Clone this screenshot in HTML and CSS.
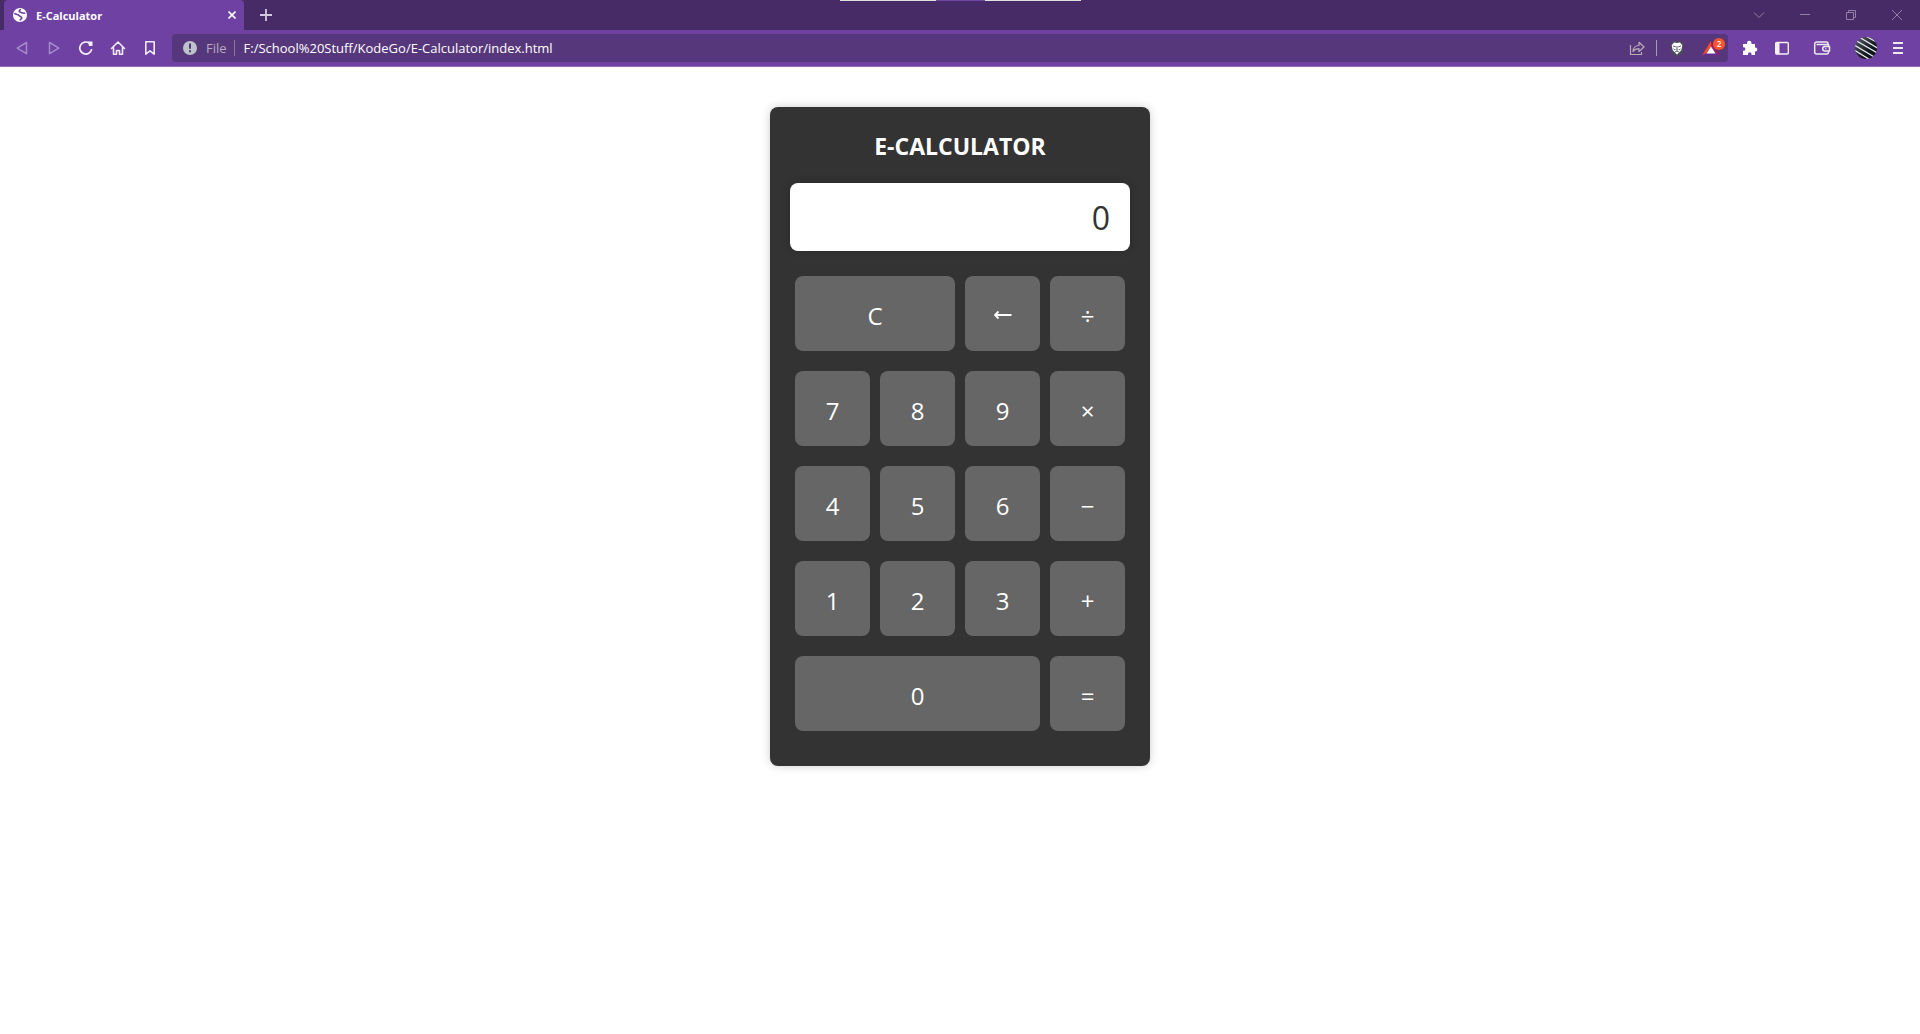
FILE: index.html
```html
<!DOCTYPE html>
<html lang="en">
<head>
<meta charset="utf-8">
<title>E-Calculator</title>
<link rel="stylesheet" href="styles.css">
</head>
<body>
<header class="browser">
  <div class="tab-strip">
    <div class="tab">
      <svg class="icon" width="16" height="16" viewBox="0 0 16 16"><circle cx="8" cy="8" r="7" fill="#fff"/><path d="M2.500 6.200C4 8 6 7 7 8.500s2.500 1 2.800 2.200-1.300 1-1.800 2.800M9 2.500C7 3 6.500 4.800 8.500 5.300s2 1.500 4.700.7" fill="none" stroke="#6e41a3" stroke-width="1.700"/></svg>
      <span class="tab-title">E-Calculator</span>
      <button class="tab-close" aria-label="Close tab"><svg width="8" height="8" viewBox="0 0 8 8"><path d="M.5.5l7 7M7.500.5l-7 7" stroke="#fff" stroke-width="1.600"/></svg></button>
    </div>
    <button class="new-tab" aria-label="New tab"><svg width="12" height="12" viewBox="0 0 12 12"><path d="M6 0v12M0 6h12" stroke="#d3c9de" stroke-width="1.800"/></svg></button>
    <div class="window-controls">
      <button class="window-button" aria-label="Search tabs"><svg width="12" height="12" viewBox="0 0 12 12"><path d="M1 3.500l5 5 5-5" class="thin"/></svg></button>
      <button class="window-button" aria-label="Minimize"><svg width="12" height="12" viewBox="0 0 12 12"><path d="M1 5.500h10" class="thin"/></svg></button>
      <button class="window-button" aria-label="Restore"><svg width="12" height="12" viewBox="0 0 12 12"><path d="M1.500 3.500h7v7h-7zM3.500 3.500v-2h7v7h-2" class="thin"/></svg></button>
      <button class="window-button" aria-label="Close"><svg width="12" height="12" viewBox="0 0 12 12"><path d="M1 1l10 10M11 1L1 11" class="thin"/></svg></button>
    </div>
    <div class="edge-marks"><i></i><i></i><i></i></div>
  </div>
  <div class="toolbar">
    <nav class="tools">
      <button class="tool" aria-label="Back"><svg width="16" height="16" viewBox="0 0 16 16"><path d="M12.500 2.500v11.200L3.200 8.100z" fill="none" stroke="#a78bc8" stroke-width="1.500" stroke-linejoin="round"/></svg></button>
      <button class="tool" aria-label="Forward"><svg width="16" height="16" viewBox="0 0 16 16"><path d="M3.500 2.500v11.200l9.300-5.600z" fill="none" stroke="#a78bc8" stroke-width="1.500" stroke-linejoin="round"/></svg></button>
      <button class="tool" aria-label="Reload"><svg width="16" height="16" viewBox="0 0 16 16"><path d="M13.700 9.200A6 6 0 1 1 11.500 3.300" fill="none" stroke="#f4effa" stroke-width="1.700"/><path d="M10 1.500h4.500V6H11z" fill="#f4effa"/></svg></button>
      <button class="tool" aria-label="Home"><svg width="16" height="16" viewBox="0 0 16 16"><path d="M1.500 8.500L8 2l6.500 6.500M3.500 7.500v6.700h3v-3.700h3v3.700h3V7.500" fill="none" stroke="#f0eaf7" stroke-width="1.600" stroke-linejoin="round" stroke-linecap="round"/></svg></button>
      <button class="tool" aria-label="Bookmark"><svg width="16" height="16" viewBox="0 0 16 16"><path d="M3.800 1.800h8.400v12.400L8 10.800l-4.200 3.400z" fill="none" stroke="#f0eaf7" stroke-width="1.600" stroke-linejoin="round"/></svg></button>
    </nav>
    <div class="omnibox">
      <svg class="icon" width="16" height="16" viewBox="0 0 16 16"><circle cx="8" cy="8" r="7" fill="#bec2ca"/><path d="M8 3.500v5.200M8 10.300v2" stroke="#57377b" stroke-width="2"/></svg>
      <span class="scheme">File</span>
      <input class="url" type="text" aria-label="Address" value="F:/School%20Stuff/KodeGo/E-Calculator/index.html">
      <button class="omni-button share" aria-label="Share"><svg width="16" height="16" viewBox="0 0 16 16"><path d="M1.500 5v9.500h11V12" fill="none" stroke="#b9aabb" stroke-width="1.200"/><path d="M4 11.500c.3-4 2.500-6 6-6V2.300L15 7l-5 4.500V8.700c-3 0-4.500.8-6 2.800z" fill="none" stroke="#b9aabb" stroke-width="1.200" stroke-linejoin="round"/></svg></button>
      <button class="omni-button" aria-label="Shields"><svg width="16" height="18" viewBox="0 0 16 18"><path d="M4.500 1h7l3 3-.7 8L8 17l-5.800-5-.7-8z" fill="#4a4d58"/><path d="M5 2.500l3 .6 3-.6 2.300 2.700-1 5L8 14.500l-4.300-4.300-1-5z" fill="#fff"/><path d="M4 6l2.700.8M12 6l-2.700.8M7 9.500L8 10.500l1-1M6 12l2-1 2 1M8 6v4M4.500 9l1.500 1M11.500 9L10 10" fill="none" stroke="#4a4d58" stroke-width=".9"/></svg></button>
      <button class="omni-button rewards" aria-label="Rewards"><svg width="18" height="15" viewBox="0 0 18 15"><path d="M9 0v5.500L4.500 12 0 14.500z" fill="#ff4724"/><path d="M9 0l9 14.500-4.500-2.500L9 5.500z" fill="#9e1f63"/><path d="M0 14.500L4.500 12h9l4.500 2.500z" fill="#662d91"/><path d="M9 5.500l4.500 7h-9z" fill="#fff"/></svg><span class="badge">2</span></button>
    </div>
    <div class="tools extras">
      <button class="tool" aria-label="Extensions"><svg width="16" height="16" viewBox="0 0 16 16"><path d="M1 4h4V3a2 2 0 0 1 4.500 0v1h3.500v3.500h.3a2 2 0 0 1 0 4H13V15H9.500v-1a1.700 1.700 0 0 0-3.500 0v1H1v-4.200h1a1.800 1.800 0 0 0 0-3.500H1z" fill="#fff"/></svg></button>
      <button class="tool" aria-label="Sidebar"><svg width="16" height="16" viewBox="0 0 16 16"><rect x="1.700" y="2.500" width="12.600" height="11.500" rx="1" fill="none" stroke="#f4effa" stroke-width="1.400"/><path d="M2 2.500h3.500V14H2z" fill="#f4effa"/></svg></button>
      <button class="tool" aria-label="Wallet"><svg width="18" height="16" viewBox="0 0 18 16"><path d="M15.500 6V4.500h-12M15 4.500V3.500a1.500 1.500 0 0 0-1.500-1.500H3.500A2 2 0 0 0 1.700 4v8a2 2 0 0 0 2 2h10a1.800 1.800 0 0 0 1.800-1.800V11.500M16.500 6.500h-4.500a2.300 2.300 0 0 0 0 4.600h4.500z" fill="none" stroke="#f0eaf7" stroke-width="1.500" stroke-linejoin="round"/><path d="M12 8.800h1.500" stroke="#f0eaf7"/></svg></button>
      <button class="tool" aria-label="Profile"><svg width="22" height="22" viewBox="0 0 22 22"><defs><clipPath id="disc"><circle cx="11" cy="11" r="11"/></clipPath><linearGradient id="shade" x1="0" y1="0" x2="1" y2="1"><stop offset="0" stop-color="#59616c"/><stop offset=".65" stop-color="#10151c"/></linearGradient></defs><g clip-path="url(#disc)"><path d="M0 0h22v22H0z" fill="url(#shade)"/><path d="M7-3l18 10M4 0l20 12M0 3l24 14M-1 8l22 13M-1 13l18 11" stroke="#e8ebee" stroke-width="1.300"/></g></svg></button>
      <button class="tool" aria-label="Menu"><svg width="10" height="12" viewBox="0 0 10 12"><path d="M0 1h10M0 6h10M0 11h10" stroke="#eee8f5" stroke-width="2"/></svg></button>
    </div>
  </div>
</header>
<main class="page">
  <section class="calculator">
    <h1 class="title">E-CALCULATOR</h1>
    <input class="display" type="text" value="0" aria-label="Result" readonly>
    <div class="keys">
      <button class="key wide">C</button><button class="key" aria-label="Backspace"><svg width="18" height="10" viewBox="0 0 18 10"><path d="M17.500 5H1.500M4.500 1.500L1 5l3.500 3.500" fill="none" stroke="#fff" stroke-width="1.800"/></svg></button><button class="key">÷</button>
      <button class="key">7</button><button class="key">8</button><button class="key">9</button><button class="key">×</button>
      <button class="key">4</button><button class="key">5</button><button class="key">6</button><button class="key">−</button>
      <button class="key">1</button><button class="key">2</button><button class="key">3</button><button class="key">+</button>
      <button class="key widest">0</button><button class="key">=</button>
    </div>
  </section>
</main>
</body>
</html>
```
FILE: styles.css
```css
* { box-sizing: border-box; }

body {
  margin: 0;
  background: #fff;
  font-family: "Open Sans", "Noto Sans", sans-serif;
}

button {
  margin: 0;
  padding: 0;
  border: 0;
  background: none;
  font-family: inherit;
  cursor: pointer;
}

svg { display: block; }
.icon { flex: none; }

/* Tab strip */
.tab-strip {
  position: relative;
  display: flex;
  height: 30px;
  padding-left: 4px;
  background: #472b66;
}

.tab {
  display: flex;
  align-items: center;
  gap: 8px;
  width: 240px;
  padding: 0 4px 0 8px;
  border-radius: 4px 4px 0 0;
  background: #6e41a3;
}

.tab-title {
  flex: 1;
  color: #fff;
  font-size: 11px;
  font-weight: 700;
}

.tab-close { padding: 4px; }
.new-tab { padding: 0 16px; }

.window-controls {
  display: flex;
  margin-left: auto;
}

.window-button {
  display: grid;
  place-items: center;
  width: 46px;
}

.thin {
  fill: none;
  stroke: #9280a5;
  stroke-width: 1;
}

.edge-marks {
  position: absolute;
  top: 0;
  left: 50%;
  display: flex;
  width: 241px;
  height: 1px;
  margin-left: -120px;
}

.edge-marks i { flex: 2; background: #dfe3e0; }
.edge-marks i:nth-child(2) { flex: 1; background: #7047a5; }

/* Toolbar */
.toolbar {
  display: flex;
  align-items: center;
  gap: 6px;
  height: 37px;
  padding: 0 6px;
  border-bottom: 1px solid #8f6bb5;
  background: #6e41a3;
}

.tools { display: flex; }

.tool {
  display: grid;
  place-items: center;
  width: 32px;
  height: 32px;
}

.extras .tool:nth-child(3) { margin: 0 12px 0 8px; }

.omnibox {
  display: flex;
  flex: 1;
  align-items: center;
  height: 28px;
  padding-left: 10px;
  border-radius: 4px;
  background: #57377b;
}

.scheme {
  margin: 0 9px 0 8px;
  padding-right: 7px;
  border-right: 1px solid #8b7699;
  color: #b6a9c2;
  font-size: 13px;
  line-height: 16px;
}

.url {
  flex: 1;
  min-width: 0;
  padding: 0;
  border: 0;
  outline: 0;
  background: none;
  color: #fff;
  font-family: inherit;
  font-size: 13px;
}

.omni-button {
  display: grid;
  place-items: center;
  width: 34px;
  height: 16px;
}

.share {
  justify-content: start;
  width: 28px;
  margin-right: 3px;
  border-right: 1px solid #a99aaf;
}

.rewards { position: relative; }

.badge {
  position: absolute;
  top: -2px;
  left: 19px;
  width: 12px;
  height: 12px;
  border-radius: 50%;
  background: #fb542b;
  color: #fff;
  font-size: 8px;
  font-weight: 600;
  line-height: 12px;
  text-align: center;
}

/* Calculator */
.page {
  display: flex;
  justify-content: center;
  padding: 40px 20px;
}

.calculator {
  width: 380px;
  padding: 21px 20px 35px;
  border-radius: 8px;
  background: #333;
  box-shadow: 0 0 10px rgba(0, 0, 0, .2);
}

.title {
  margin: 0 0 19px;
  color: #fff;
  font-size: 23px;
  font-weight: 700;
  line-height: 36px;
  text-align: center;
}

.display {
  display: block;
  width: 100%;
  height: 68px;
  margin-bottom: 25px;
  padding: 0 20px;
  border: 0;
  border-radius: 8px;
  outline: 0;
  background: #fff;
  box-shadow: 0 0 10px rgba(0, 0, 0, .2);
  color: #333;
  font-family: inherit;
  font-size: 32px;
  font-weight: 400;
  text-align: right;
}

.keys {
  display: grid;
  grid-template-columns: repeat(4, 1fr);
  grid-auto-rows: 75px;
  gap: 20px 10px;
  padding: 0 5px;
}

.key {
  display: grid;
  place-items: center;
  padding-top: 3px;
  border-radius: 8px;
  background: #666;
  color: #fff;
  font-size: 24px;
}

.wide { grid-column: span 2; }
.widest { grid-column: span 3; }
```
